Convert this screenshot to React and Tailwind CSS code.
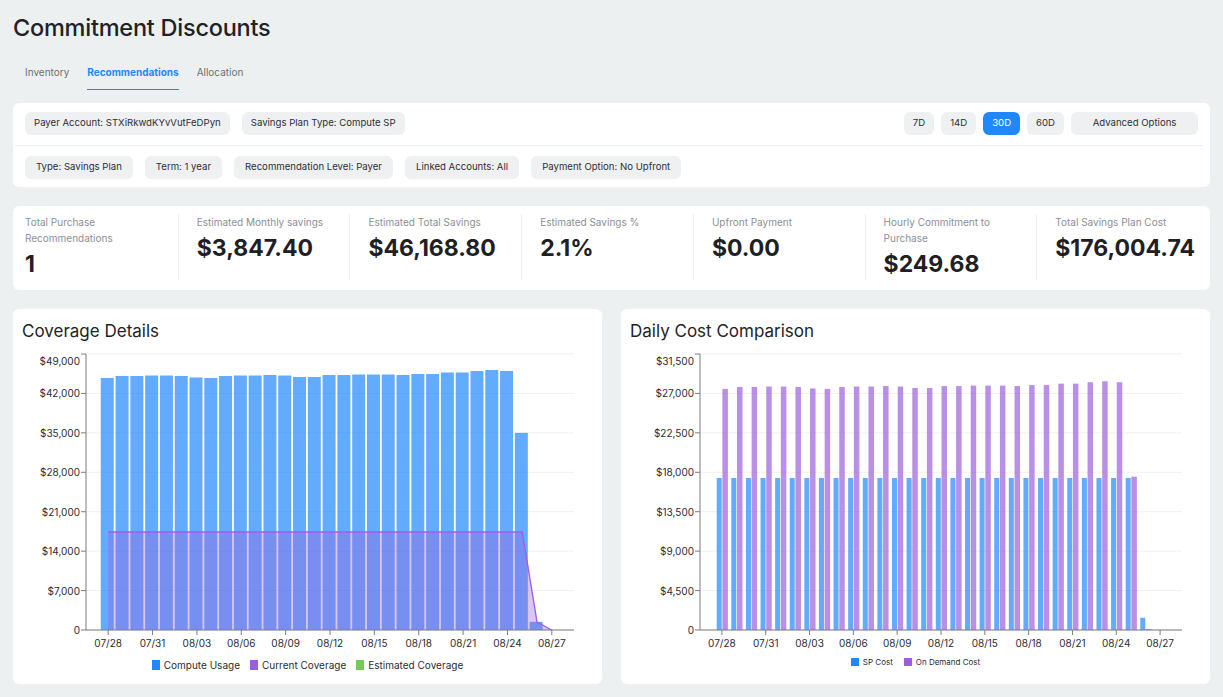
const TABS = ['Inventory', 'Recommendations', 'Allocation']

const FILTERS_TOP = ['Payer Account: STXiRkwdKYvVutFeDPyn', 'Savings Plan Type: Compute SP']
const FILTERS_BOTTOM = [
  'Type: Savings Plan',
  'Term: 1 year',
  'Recommendation Level: Payer',
  'Linked Accounts: All',
  'Payment Option: No Upfront',
]
const RANGES = ['7D', '14D', '30D', '60D']

const STATS = [
  { label: 'Total Purchase Recommendations', value: '1' },
  { label: 'Estimated Monthly savings', value: '$3,847.40' },
  { label: 'Estimated Total Savings', value: '$46,168.80' },
  { label: 'Estimated Savings %', value: '2.1%' },
  { label: 'Upfront Payment', value: '$0.00' },
  { label: 'Hourly Commitment to Purchase', value: '$249.68' },
  { label: 'Total Savings Plan Cost', value: '$176,004.74' },
]

// index 0 = 07/27 (no data), 1 = 07/28 ... 30 = 08/26
const USAGE = [
  0, 44740, 45100, 45100, 45180, 45180, 45100, 44830, 44740, 45100, 45180, 45180, 45270, 45180, 44920,
  44920, 45270, 45270, 45360, 45360, 45360, 45270, 45450, 45450, 45720, 45720, 45980, 46160, 45980, 35000,
  1450,
]
const ON_DEMAND = USAGE.map((v, i) => (i === 29 ? 17500 : i === 30 ? 120 : v * 0.615))
const SP_COST = USAGE.map((v, i) => (i === 0 ? 0 : i === 30 ? 1400 : 17350))

const DAYS = 33
const dateLabel = (i) => {
  const d = 27 + i
  return d > 31 ? `08/${String(d - 31).padStart(2, '0')}` : `07/${d}`
}
const money = (v) => (v === 0 ? '0' : `$${v.toLocaleString('en-US')}`)

function Grid({ x0, x1, top, bottom, max, step }) {
  const y = (v) => bottom - (v / max) * (bottom - top)
  const ticks = []
  for (let v = 0; v <= max; v += step) ticks.push(v)
  return (
    <g>
      {ticks.map((v) => (
        <line key={v} x1={x0} x2={x1} y1={y(v)} y2={y(v)} stroke="#eef0f1" />
      ))}
    </g>
  )
}

function Axes({ x0, x1, top, bottom, max, step }) {
  const y = (v) => bottom - (v / max) * (bottom - top)
  const band = (x1 - x0) / DAYS
  const ticks = []
  for (let v = 0; v <= max; v += step) ticks.push(v)
  const xTicks = []
  for (let i = 1; i <= 31; i += 3) xTicks.push(i)
  return (
    <g fontSize="10" fill="#2b2d31">
      <line x1={x0} x2={x0} y1={top} y2={bottom} stroke="#7a7d82" />
      <line x1={x0} x2={x1} y1={bottom} y2={bottom} stroke="#7a7d82" />
      {ticks.map((v) => (
        <g key={v}>
          <line x1={x0 - 5} x2={x0} y1={y(v)} y2={y(v)} stroke="#7a7d82" />
          <text x={x0 - 6} y={v === max ? top + 7 : y(v)} textAnchor="end" dominantBaseline="central">
            {money(v)}
          </text>
        </g>
      ))}
      {xTicks.map((i) => {
        const cx = x0 + band * (i + 0.5)
        return (
          <g key={i}>
            <line x1={cx} x2={cx} y1={bottom} y2={bottom + 5} stroke="#7a7d82" />
            <text x={cx} y={bottom + 13} textAnchor="middle" dominantBaseline="central">
              {dateLabel(i)}
            </text>
          </g>
        )
      })}
    </g>
  )
}

function CoverageChart() {
  const x0 = 73
  const x1 = 561
  const top = 8
  const bottom = 284
  const max = 49000
  const band = (x1 - x0) / DAYS
  const y = (v) => bottom - (v / max) * (bottom - top)
  const cx = (i) => x0 + band * (i + 0.5)

  const coverage = []
  for (let i = 1; i <= 29; i++) coverage.push([cx(i), y(17400)])
  coverage.push([cx(30), y(1400)])
  coverage.push([cx(31), y(0)])
  const line = coverage.map(([a, b]) => `${a},${b}`).join(' ')
  const area = `M${cx(1)},${bottom} L${line.split(' ').join(' L')} Z`

  return (
    <svg width="589" height="305" className="block">
      <Grid x0={x0} x1={x1} top={top} bottom={bottom} max={max} step={7000} />
      {USAGE.map((v, i) =>
        i === 0 ? null : (
          <rect
            key={i}
            x={x0 + band * i}
            y={y(v)}
            width={band - 1.8}
            height={bottom - y(v)}
            fill="#1f88fe"
            fillOpacity="0.7"
          />
        ),
      )}
      <path d={area} fill="#9c5fdc" fillOpacity="0.36" />
      <polyline points={line} fill="none" stroke="#a35ee8" strokeWidth="1.4" />
      <Axes x0={x0} x1={x1} top={top} bottom={bottom} max={max} step={7000} />
    </svg>
  )
}

function DailyCostChart() {
  const x0 = 79
  const x1 = 561
  const top = 8
  const bottom = 284
  const max = 31500
  const band = (x1 - x0) / DAYS
  const y = (v) => bottom - (v / max) * (bottom - top)

  return (
    <svg width="589" height="305" className="block">
      <Grid x0={x0} x1={x1} top={top} bottom={bottom} max={max} step={4500} />
      {SP_COST.map((v, i) => {
        if (i === 0) return null
        const c = x0 + band * (i + 0.5)
        const d = ON_DEMAND[i]
        return (
          <g key={i}>
            <rect x={c - 5.2} y={y(v)} width="5" height={bottom - y(v)} fill="#1f88fe" fillOpacity="0.7" />
            <rect x={c + 0.5} y={y(d)} width="5.5" height={bottom - y(d)} fill="#9c5fdc" fillOpacity="0.7" />
          </g>
        )
      })}
      <Axes x0={x0} x1={x1} top={top} bottom={bottom} max={max} step={4500} />
    </svg>
  )
}

function Chip({ children, wide }) {
  return (
    <div
      className={`flex h-[23px] items-center whitespace-nowrap rounded-md bg-[#eef0f2] text-[9.6px] text-[#2d2f33] ${
        wide ? 'px-[11px]' : 'px-[9px]'
      }`}
    >
      {children}
    </div>
  )
}

function LegendItem({ color, label, small }) {
  return (
    <div className="flex items-center gap-[4px]">
      <span className={`${small ? 'h-[8px] w-[8px]' : 'h-[10px] w-[8px]'} ${color}`} />
      <span>{label}</span>
    </div>
  )
}

export default function App() {
  return (
    <div className="min-h-screen bg-[#edf0f1] px-[13px] pb-[13px] pt-[14px] text-[#1f2226] [font-family:Inter,sans-serif]">
      <h1 className="text-[23.5px] font-medium leading-[28px] tracking-[-0.01em]">Commitment Discounts</h1>

      <div className="mt-[20px] flex items-start gap-[18px] pl-3 text-[10px] leading-4">
        {TABS.map((tab) => (
          <div
            key={tab}
            className={`pt-[2px] pb-[9px] ${
              tab === 'Recommendations'
                ? 'border-b-[1.5px] border-[#1f88fe] font-bold text-[#1f88fe]'
                : 'text-[#6b7076]'
            }`}
          >
            {tab}
          </div>
        ))}
      </div>

      <div className="mt-[13px] rounded-md bg-white px-3 pt-[9px] pb-[8px]">
        <div className="flex items-center justify-between">
          <div className="flex gap-3">
            {FILTERS_TOP.map((f) => (
              <Chip key={f}>{f}</Chip>
            ))}
          </div>
          <div className="flex gap-[7px] text-[9.6px]">
            {RANGES.map((r) => (
              <button
                key={r}
                type="button"
                className={`h-[23px] rounded-md px-[9px] ${
                  r === '30D' ? 'bg-[#1f88fe] text-white' : 'bg-[#eef0f2] text-[#2d2f33]'
                }`}
              >
                {r}
              </button>
            ))}
            <button type="button" className="h-[23px] w-[127px] rounded-md bg-[#eef0f2] text-[#2d2f33]">
              Advanced Options
            </button>
          </div>
        </div>
        <div className="my-[10px] ml-[-10px] mr-[-5px] h-px bg-[#eceef0]" />
        <div className="flex gap-3">
          {FILTERS_BOTTOM.map((f) => (
            <Chip key={f} wide>
              {f}
            </Chip>
          ))}
        </div>
      </div>

      <div className="mt-[19px] flex rounded-md bg-white px-3 pt-2 pb-[10px]">
        {STATS.map((s, i) => (
          <div key={s.label} className="contents">
            {i > 0 && <div className="ml-[10px] mr-[18px] w-px shrink-0 bg-[#eceef0]" />}
            <div className="min-w-0 flex-1 basis-0">
              <div className="text-[10px] leading-4 text-[#8b8f96]">{s.label}</div>
              <div className="mt-[2px] whitespace-nowrap text-[23px] font-bold leading-8 text-[#1e2024]">
                {s.value}
              </div>
            </div>
          </div>
        ))}
      </div>

      <div className="mt-[19px] grid grid-cols-2 gap-[19px]">
        <div className="h-[375px] overflow-hidden rounded-md bg-white">
          <div className="px-[9px] pt-[11px] text-[17px] leading-[22px]">Coverage Details</div>
          <div className="mt-1">
            <CoverageChart />
          </div>
          <div className="mt-[7px] flex justify-center gap-[10px] text-[10px] leading-[14px] text-[#2b2d31]">
            <LegendItem color="bg-[#1f88fe]" label="Compute Usage" />
            <LegendItem color="bg-[#9c5fdc]" label="Current Coverage" />
            <LegendItem color="bg-[#74c95a]" label="Estimated Coverage" />
          </div>
        </div>

        <div className="h-[375px] overflow-hidden rounded-md bg-white">
          <div className="px-[9px] pt-[11px] text-[17px] leading-[22px]">Daily Cost Comparison</div>
          <div className="mt-1">
            <DailyCostChart />
          </div>
          <div className="mt-[5px] flex justify-center gap-[11px] text-[8px] leading-[12px] text-[#2b2d31]">
            <LegendItem small color="bg-[#1f88fe]" label="SP Cost" />
            <LegendItem small color="bg-[#9c5fdc]" label="On Demand Cost" />
          </div>
        </div>
      </div>
    </div>
  )
}
